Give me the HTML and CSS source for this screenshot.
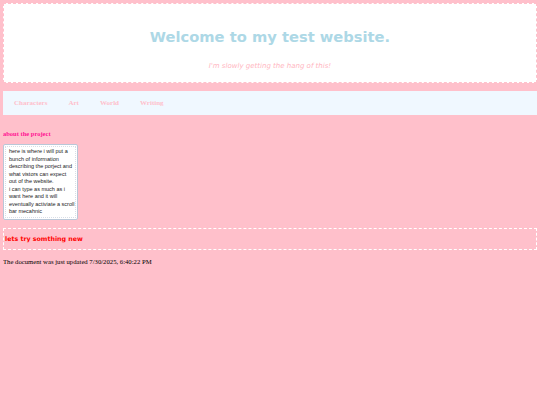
FILE: index.html
```html
<html>
<head>
  <title>My test website</title>
  <link rel="stylesheet" href="styles.css">
</head>
<body>
    <div class="header">
        <h1 class="title">Welcome to my test website.</h1>
        <p class="subtitle">I'm slowly getting the hang of this!</p>
    </div>

    <div class="navbar">
        <a class="nav_link" href="#">Characters</a>
        <a class="nav_link" href="#">Art</a>
        <a class="nav_link" href="#">World</a>
        <a class="nav_link" href="#">Writing</a>
    </div>

    <h4 class="section_label">about the project</h4>
    <div class="about_box">
        <div class="about_text">
            here is where i will put a bunch of information describing the porject and what vistors can expect out of the website.<br />
            i can type as much as i want here and it will eventually activiate a scroll bar mecahnic
        </div>
    </div>

    <div class="new_section">
        <span class="new_label">lets try somthing new</span>
    </div>

    <p class="updated">The document was just updated 7/30/2025, 6:40:22 PM</p>
</body>
</html>
```

FILE: styles.css
```css
body {
    margin: 3px;
    background-color: #ffc0cb;
    font-family: "Liberation Serif", serif;
}

.header {
    background-color: #fff;
    border: 1px dashed #ffc0cb;
    height: 78px;
    text-align: center;
    font-family: "DejaVu Sans", Verdana, sans-serif;
}

.title {
    margin: 0;
    padding-top: 24px;
    font-size: 14.7px;
    color: #add8e6;
}

.subtitle {
    margin: 17px 0 0 0;
    font-size: 7px;
    font-style: italic;
    color: #ffb6c1;
}

.navbar {
    display: flex;
    margin-top: 8px;
    height: 24px;
    align-items: center;
    background-color: #f0f8ff;
    padding-left: 11px;
}

.nav_link {
    font-size: 7px;
    font-weight: bold;
    color: #ffbfcb;
    text-decoration: none;
    margin-right: 21px;
}

.section_label {
    margin: 15px 0 0 0;
    font-size: 6.5px;
    color: #ff1493;
}

.about_box {
    width: 71px;
    margin-top: 7px;
    padding: 1px;
    background-color: #fff;
    border: 1px solid #b9c7d8;
    border-radius: 2px;
}

.about_text {
    border: 1px dotted #d8dde6;
    padding: 1px 0 1px 3px;
    font-family: "Liberation Sans", Arial, sans-serif;
    font-size: 5.5px;
    line-height: 7.5px;
    color: #222;
}

.new_section {
    margin-top: 8px;
    border: 1px dashed #fff;
    height: 20px;
    display: flex;
    align-items: center;
    padding-left: 1px;
}

.new_label {
    font-family: "DejaVu Sans", Verdana, sans-serif;
    font-size: 6.3px;
    font-weight: bold;
    color: #f00;
}

.updated {
    margin: 8px 0 0 0;
    font-size: 6.7px;
    color: #000;
}
```
